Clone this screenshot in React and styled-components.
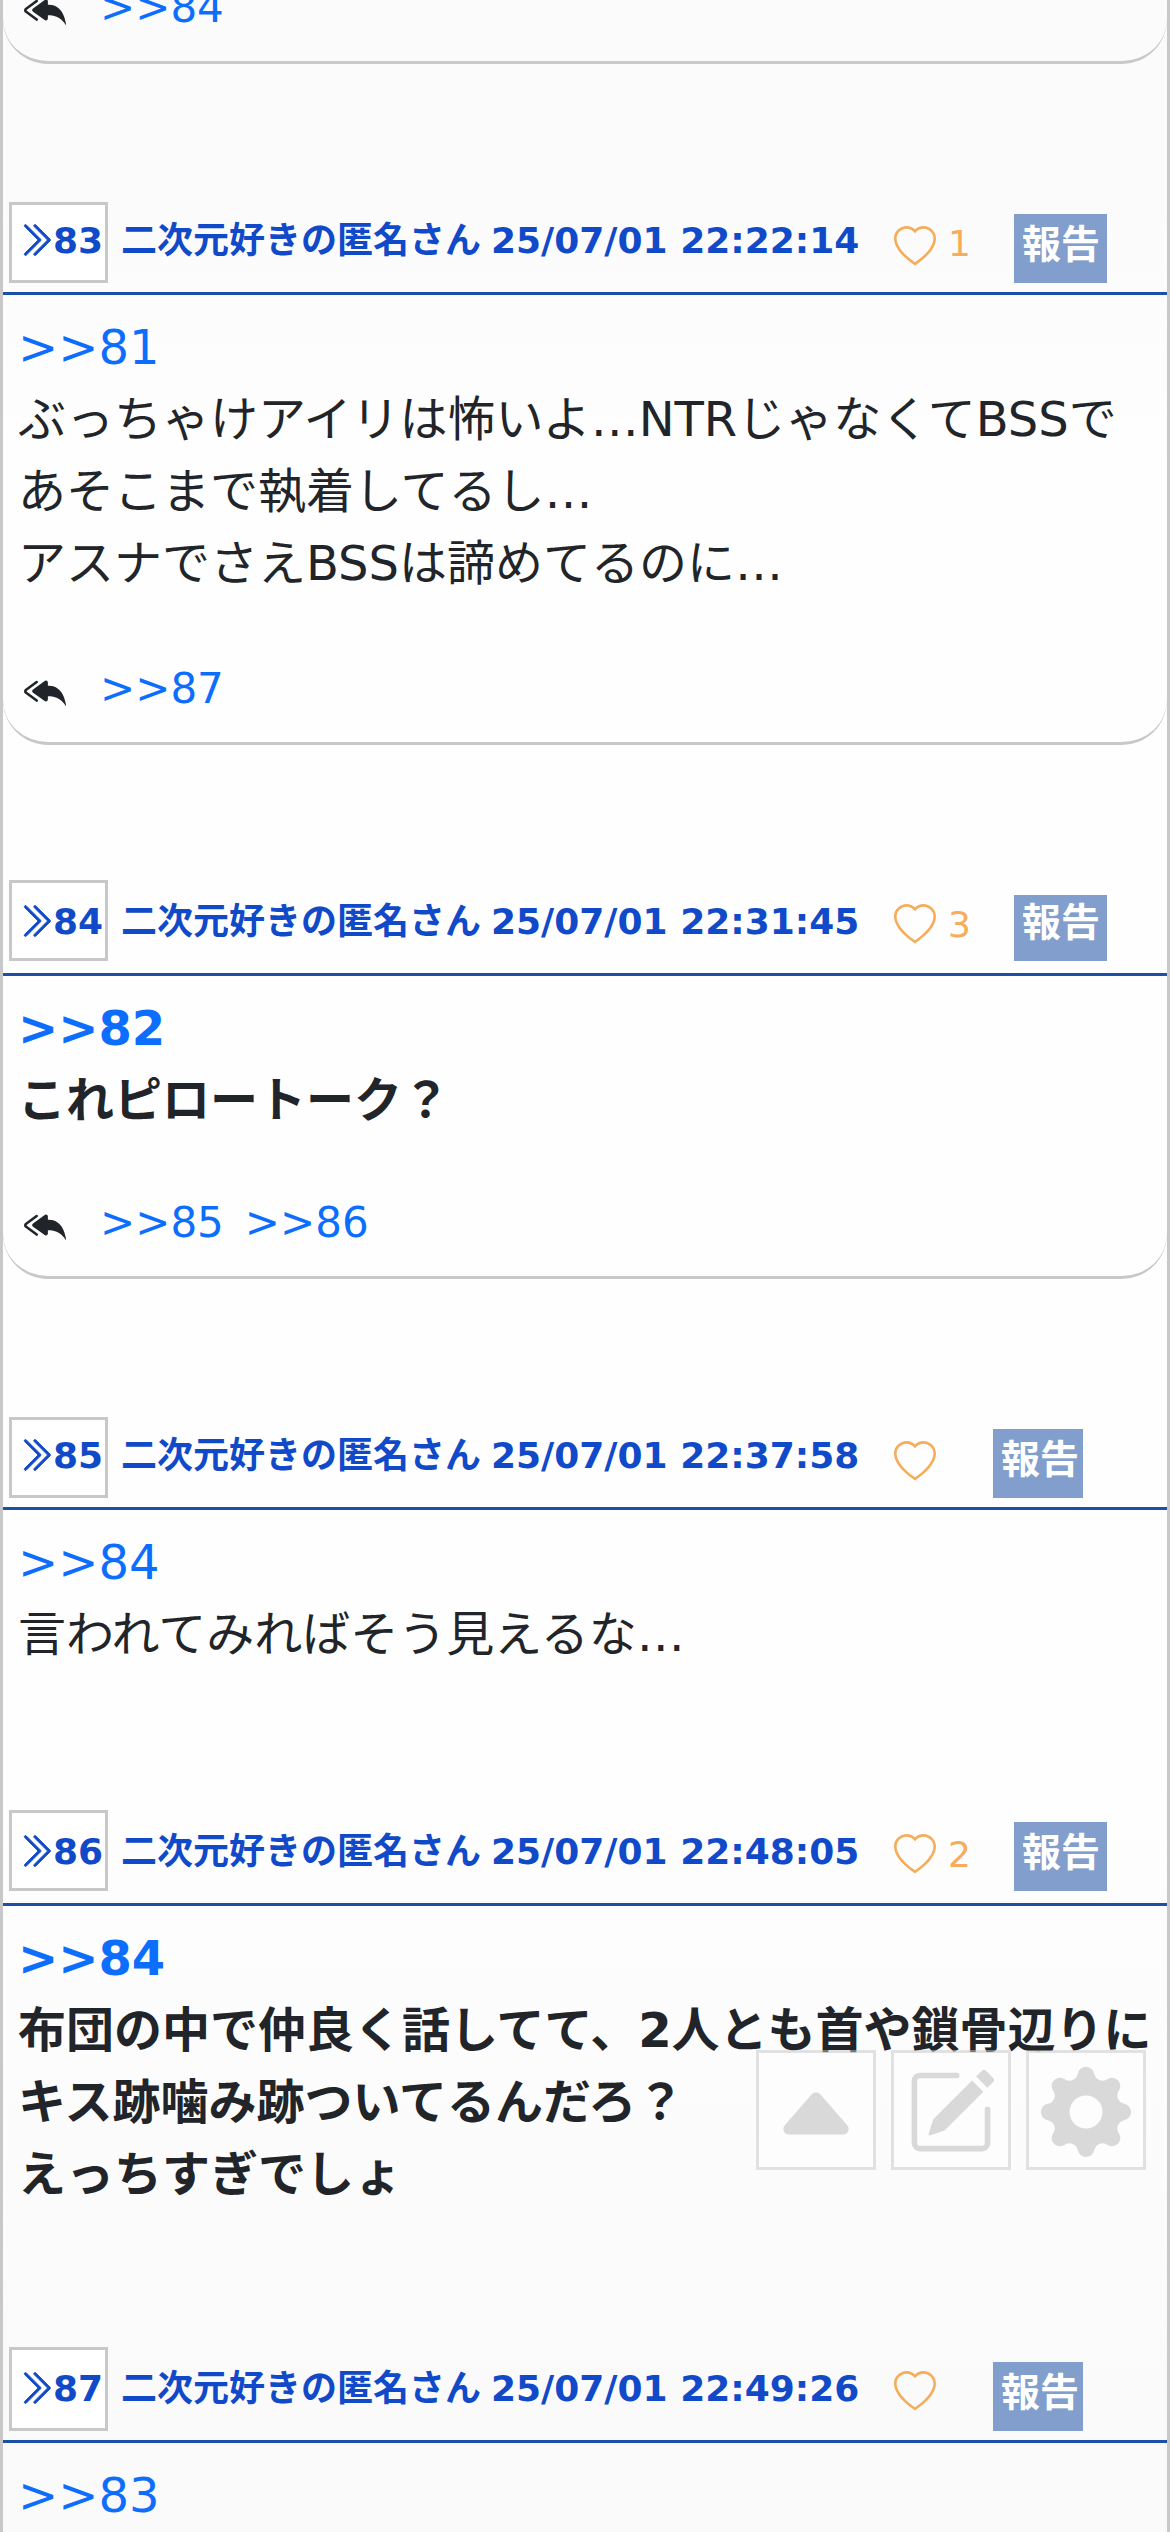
import React from 'react';
import styled, { createGlobalStyle } from 'styled-components';
import {
  BsCaretUpFill,
  BsChevronDoubleRight,
  BsGearFill,
  BsHeart,
  BsPencilSquare,
  BsReplyAllFill,
} from 'react-icons/bs';

const NAME = '二次元好きの匿名さん';

const posts = [
  {
    no: 83,
    date: '25/07/01 22:22:14',
    likes: 1,
    gap: 135,
    inset: 3,
    anchor: 81,
    lines: [
      'ぶっちゃけアイリは怖いよ…NTRじゃなくてBSSで',
      'あそこまで執着してるし…',
      'アスナでさえBSSは諦めてるのに…',
    ],
    replies: [87],
    replyGap: 58,
  },
  {
    no: 84,
    date: '25/07/01 22:31:45',
    likes: 3,
    gap: 135,
    reportHeight: 66,
    anchor: 82,
    strong: true,
    lines: ['これピロートーク？'],
    replies: [85, 86],
    replyGap: 55,
  },
  {
    no: 85,
    date: '25/07/01 22:37:58',
    gap: 135,
    inset: 3,
    anchor: 84,
    lines: ['言われてみればそう見えるな…'],
  },
  {
    no: 86,
    date: '25/07/01 22:48:05',
    likes: 2,
    gap: 140,
    anchor: 84,
    strong: true,
    lines: [
      '布団の中で仲良く話してて、2人とも首や鎖骨辺りに',
      'キス跡噛み跡ついてるんだろ？',
      'えっちすぎでしょ',
    ],
  },
  {
    no: 87,
    date: '25/07/01 22:49:26',
    gap: 137,
    boxHeight: 84,
    anchor: 83,
    lines: [],
  },
];

function ReplyList({ numbers }) {
  return (
    <Replies>
      <ReplyIcon />
      {numbers.map((n) => (
        <ReplyLink key={n}>&gt;&gt;{n}</ReplyLink>
      ))}
    </Replies>
  );
}

function Post({ post }) {
  const inset = post.inset || 0;
  const boxHeight = post.boxHeight || 81;
  const reportHeight = post.reportHeight || 69;
  const counted = Boolean(post.likes);

  return (
    <Article $gap={post.gap}>
      <PostHeader>
        <NumberBox $inset={inset} $height={boxHeight}>
          <Chevron />
          {post.no}
        </NumberBox>
        <Author>
          <span>{NAME}</span>
          <span>{post.date}</span>
        </Author>
        <Like $counted={counted}>
          <Heart $inset={inset} />
          {counted && <LikeCount>{post.likes}</LikeCount>}
        </Like>
        <Report
          $top={inset + boxHeight - reportHeight}
          $height={reportHeight}
          $counted={counted}
        >
          報告
        </Report>
      </PostHeader>
      <Body $closed={Boolean(post.replies)} $strong={post.strong}>
        <Anchor>&gt;&gt;{post.anchor}</Anchor>
        {post.lines.map((line) => (
          <Line key={line}>{line}</Line>
        ))}
        {post.replies && (
          <ReplyArea $gap={post.replyGap}>
            <ReplyList numbers={post.replies} />
          </ReplyArea>
        )}
      </Body>
    </Article>
  );
}

export default function App() {
  return (
    <>
      <GlobalStyle />
      <Thread>
        <PreviousPost>
          <ReplyList numbers={[84]} />
        </PreviousPost>
        {posts.map((post) => (
          <Post key={post.no} post={post} />
        ))}
        <FloatingMenu>
          <MenuButton aria-label="top">
            <BsCaretUpFill />
          </MenuButton>
          <MenuButton aria-label="write">
            <BsPencilSquare />
          </MenuButton>
          <MenuButton aria-label="settings">
            <BsGearFill />
          </MenuButton>
        </FloatingMenu>
      </Thread>
    </>
  );
}

const GlobalStyle = createGlobalStyle`
  * {
    box-sizing: border-box;
  }

  body {
    margin: 0;
    color: #212529;
    font-family: 'DejaVu Sans', 'Noto Sans CJK JP', sans-serif;
  }
`;

const Thread = styled.main`
  position: relative;
  width: 1170px;
  height: 2532px;
  overflow: hidden;
  display: flex;
  flex-direction: column;
  border-left: 3px solid #c8c8c8;
  border-right: 3px solid #c8c8c8;
  background: linear-gradient(#fbfbfb 0%, #fbfbfb 8%, #fefefe 18%, #fefefe 70%, #fafafa 94%);
`;

const PreviousPost = styled.div`
  flex: none;
  height: 64px;
  display: flex;
  flex-direction: column;
  justify-content: flex-end;
  padding: 0 15px 22px;
  border-bottom: 3px solid #c8c8c8;
  border-radius: 0 0 45px 45px;
`;

const Article = styled.article`
  flex: none;
  margin-top: ${({ $gap }) => $gap}px;
`;

const PostHeader = styled.header`
  height: 96px;
  display: flex;
  align-items: flex-start;
  padding-left: 6px;
  border-bottom: 3px solid #1b4fa8;
  color: #114ac8;
  font-size: 36px;
  font-weight: bold;
  line-height: 54px;
  white-space: nowrap;
`;

const NumberBox = styled.a`
  flex: none;
  width: 99px;
  height: ${({ $height }) => $height}px;
  margin-top: ${({ $inset }) => $inset}px;
  padding: ${({ $inset }) => 12 - $inset}px 0 0 4px;
  display: flex;
  border: 3px solid #c8c8c8;
  background: #fff;
`;

const Chevron = styled(BsChevronDoubleRight)`
  flex: none;
  width: 38px;
  height: 38px;
  margin: 7px -1px 0 0;
  stroke-width: 0.4px;
`;

const Author = styled.div`
  flex: none;
  width: 773px;
  margin: 15px 0 0 13px;
  display: flex;
  gap: 10px;
`;

const Like = styled.span`
  flex: none;
  width: ${({ $counted }) => ($counted ? 120 : 99)}px;
  display: flex;
  color: #f5ad5b;
  font-weight: normal;
`;

const Heart = styled(BsHeart)`
  flex: none;
  width: 42px;
  height: 42px;
  margin: ${({ $inset }) => 24 + $inset}px 12px 0 0;
`;

const LikeCount = styled.span`
  margin-top: 18px;
`;

const Report = styled.span`
  flex: none;
  width: ${({ $counted }) => ($counted ? 93 : 90)}px;
  height: ${({ $height }) => $height}px;
  margin-top: ${({ $top }) => $top}px;
  padding-left: 8px;
  background: #819ecc;
  color: #fff;
  font-size: 39px;
  line-height: ${({ $height }) => $height * 2 - 76}px;
`;

const Body = styled.div`
  padding: 16px 0 ${({ $closed }) => ($closed ? 22 : 0)}px 15px;
  border-bottom: ${({ $closed }) => ($closed ? '3px solid #c8c8c8' : 'none')};
  border-radius: 0 0 45px 45px;
  font-size: 48px;
  font-weight: ${({ $strong }) => ($strong ? 'bold' : 'normal')};
  line-height: 72px;
  white-space: nowrap;
`;

const Line = styled.div`
  height: 72px;
`;

const Anchor = styled(Line)`
  color: #0d6efd;
`;

const ReplyArea = styled.div`
  margin-top: ${({ $gap }) => $gap}px;
`;

const Replies = styled.div`
  height: 63px;
  flex: none;
  display: flex;
  gap: 21px;
  font-size: 42px;
  font-weight: normal;
  line-height: 63px;
`;

const ReplyIcon = styled(BsReplyAllFill)`
  flex: none;
  width: 42px;
  height: 42px;
  margin: 13px 13px 0 6px;
  color: #212529;
`;

const ReplyLink = styled.a`
  color: #0d6efd;
`;

const FloatingMenu = styled.nav`
  position: absolute;
  top: 2050px;
  right: 21px;
  display: flex;
  gap: 15px;
  opacity: 0.5;
`;

const MenuButton = styled.button`
  width: 120px;
  height: 120px;
  display: flex;
  justify-content: center;
  padding: 14px 0 0;
  border: 3px solid #c8c8c8;
  background: #fff;
  color: #b8b8b8;
  font-size: 90px;
`;
